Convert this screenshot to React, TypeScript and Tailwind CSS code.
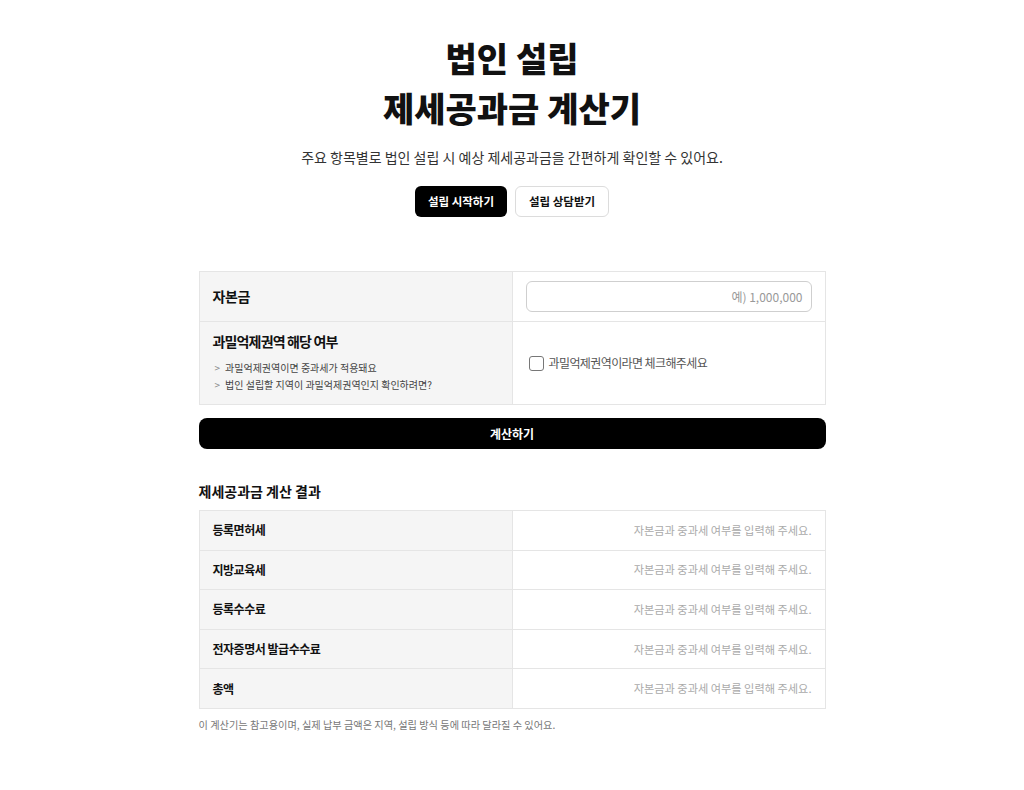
import { useState } from "react";

const RESULT_ROWS = ["등록면허세", "지방교육세", "등록수수료", "전자증명서 발급수수료", "총액"];

const FONT = "font-['Noto_Sans_CJK_KR','Noto_Sans',sans-serif]";

export default function App(): React.ReactElement {
  const [capital, setCapital] = useState("");
  const [overcrowded, setOvercrowded] = useState(false);

  return (
    <div className={`min-h-screen bg-white text-[#111] ${FONT}`}>
      <main className="mx-auto w-[627px] pt-[33px] pb-10">
        <section className="flex flex-col items-center">
          <h1 className="text-center text-[34px] font-black leading-[50px]">
            법인 설립
            <br />
            제세공과금 계산기
          </h1>
          <p className="mt-[14px] text-[14px] leading-5 text-[#333]">
            주요 항목별로 법인 설립 시 예상 제세공과금을 간편하게 확인할 수 있어요.
          </p>
          <div className="mt-[19px] flex gap-2">
            <button
              type="button"
              className="h-[31px] rounded-md bg-black px-[13px] text-[11.5px] font-bold text-white"
            >
              설립 시작하기
            </button>
            <button
              type="button"
              className="h-[31px] rounded-md border border-[#dcdcdc] bg-white px-[13px] text-[11.5px] font-bold text-[#111]"
            >
              설립 상담받기
            </button>
          </div>
        </section>

        <table className="mt-[54px] w-full table-fixed border-collapse">
          <tbody>
            <tr className="h-[50px]">
              <th className="w-1/2 border border-[#e5e5e5] bg-[#f5f5f5] px-[13px] text-left text-[14px] font-bold tracking-[-0.03em]">
                자본금
              </th>
              <td className="border border-[#e5e5e5] px-[13px]">
                <input
                  value={capital}
                  onChange={(e) => setCapital(e.target.value)}
                  placeholder="예) 1,000,000"
                  className="h-[31px] w-full rounded-md border border-[#cfcfcf] px-2 text-right text-[12px] outline-none placeholder:text-[#999]"
                />
              </td>
            </tr>
            <tr className="h-[83px]">
              <th className="border border-[#e5e5e5] bg-[#f5f5f5] px-[13px] pt-[9px] pb-[10px] text-left align-top font-normal">
                <p className="text-[14px] font-bold leading-5 tracking-[-0.06em]">과밀억제권역 해당 여부</p>
                <ul className="mt-[8px] text-[10px] leading-[17px] text-[#444]">
                  <li className="flex items-center gap-[5px] pl-[2px]">
                    <span className="text-[#888]">&gt;</span>
                    과밀억제권역이면 중과세가 적용돼요
                  </li>
                  <li className="flex items-center gap-[5px] pl-[2px]">
                    <span className="text-[#888]">&gt;</span>
                    법인 설립할 지역이 과밀억제권역인지 확인하려면?
                  </li>
                </ul>
              </th>
              <td className="border border-[#e5e5e5] px-4">
                <label className="flex cursor-pointer items-center gap-[5px] text-[12px] tracking-[-0.05em] text-[#555]">
                  <input
                    type="checkbox"
                    checked={overcrowded}
                    onChange={(e) => setOvercrowded(e.target.checked)}
                    className="h-[15px] w-[15px] appearance-none rounded-[3px] border border-[#777] bg-white checked:bg-black"
                  />
                  과밀억제권역이라면 체크해주세요
                </label>
              </td>
            </tr>
          </tbody>
        </table>

        <button
          type="button"
          className="mt-[13px] h-[31px] w-full rounded-lg bg-black text-[12px] font-bold text-white"
        >
          계산하기
        </button>

        <h2 className="mt-[32px] text-[14px] font-bold leading-5">제세공과금 계산 결과</h2>

        <table className="mt-[9px] w-full table-fixed border-collapse">
          <tbody>
            {RESULT_ROWS.map((label) => (
              <tr key={label} className="h-[39.6px]">
                <th className="w-1/2 border border-[#e5e5e5] bg-[#f5f5f5] px-[13px] text-left text-[12px] font-bold tracking-[-0.04em]">
                  {label}
                </th>
                <td className="border border-[#e5e5e5] px-[13px] text-right text-[11.2px] text-[#aaa]">
                  자본금과 중과세 여부를 입력해 주세요.
                </td>
              </tr>
            ))}
          </tbody>
        </table>

        <p className="mt-[9px] text-[10.2px] leading-[14px] text-[#777]">
          이 계산기는 참고용이며, 실제 납부 금액은 지역, 설립 방식 등에 따라 달라질 수 있어요.
        </p>
      </main>
    </div>
  );
}
